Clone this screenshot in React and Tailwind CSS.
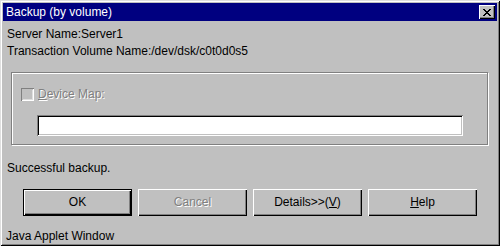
import React from "react";

function WinButton({ label, isDefault, disabled }) {
  const face = (
    <div className="flex h-full w-full items-center justify-center bg-[#c0c0c0] shadow-[inset_1px_1px_0_#fff,inset_-1px_-1px_0_#000,inset_-2px_-2px_0_#808080]">
      <span className={disabled ? "text-[#808080] [text-shadow:1px_1px_0_#fff]" : "text-black"}>{label}</span>
    </div>
  );
  if (isDefault) {
    return <div className="h-[27px] w-[109px] border border-black">{face}</div>;
  }
  return <div className="h-[27px] w-[109px]">{face}</div>;
}

export default function App() {
  return (
    <div className="h-[246px] w-[500px] overflow-hidden bg-[#c0c0c0] p-[3px] text-[12px] leading-[17px] text-black shadow-[inset_1px_1px_0_#dfdfdf,inset_-1px_-1px_0_#000,inset_2px_2px_0_#fff,inset_-2px_-2px_0_#808080] [font-family:'Liberation_Sans',Arial,sans-serif]">
      {/* title bar */}
      <div className="flex h-[18px] items-center justify-between bg-[#000080] pl-[3px] pr-[2px]">
        <span className="leading-[18px] text-white">Backup (by volume)</span>
        <div className="flex h-[14px] w-[16px] items-center justify-center bg-[#c0c0c0] shadow-[inset_1px_1px_0_#fff,inset_-1px_-1px_0_#000,inset_-2px_-2px_0_#808080]">
          <svg width="8" height="7" viewBox="0 0 8 7" shapeRendering="crispEdges">
            <path d="M0 0h2v1h-2zM6 0h2v1h-2zM1 1h2v1h-2zM5 1h2v1h-2zM2 2h4v1h-4zM3 3h2v1h-2zM2 4h4v1h-4zM1 5h2v1h-2zM5 5h2v1h-2zM0 6h2v1h-2zM6 6h2v1h-2z" fill="#000" />
          </svg>
        </div>
      </div>

      <div className="flex flex-col px-[4px]">
        <div className="mt-[5px]">Server Name:Server1</div>
        <div>Transaction Volume Name:/dev/dsk/c0t0d0s5</div>

        {/* group box */}
        <div className="ml-[4px] mt-[12px] h-[73px] w-[477px] border border-[#808080] pl-[9px] pt-[15px] shadow-[1px_1px_0_#fff,inset_1px_1px_0_#fff]">
          <div className="flex h-[13px] items-center">
            <div className="h-[13px] w-[13px] bg-[#c0c0c0] shadow-[inset_1px_1px_0_#808080,inset_-1px_-1px_0_#fff,inset_2px_2px_0_#c0c0c0,inset_-2px_-2px_0_#dfdfdf]" />
            <span className="ml-[4px] text-[#808080] [text-shadow:1px_1px_0_#fff]">
              <span className="underline">D</span>evice Map:
            </span>
          </div>
          <div className="ml-[16px] mt-[14px] h-[21px] w-[426px] bg-white shadow-[inset_1px_1px_0_#808080,inset_-1px_-1px_0_#fff,inset_2px_2px_0_#000,inset_-2px_-2px_0_#c0c0c0]" />
        </div>

        <div className="mt-[15px]">Successful backup.</div>

        <div className="ml-[16px] mt-[12px] flex gap-[6px]">
          <WinButton label="OK" isDefault />
          <WinButton label="Cancel" disabled />
          <WinButton label={<>Details&gt;&gt;(<span className="underline">V</span>)</>} />
          <WinButton label={<><span className="underline">H</span>elp</>} />
        </div>

        <div className="-ml-[1px] mt-[12px]">Java Applet Window</div>
      </div>
    </div>
  );
}
